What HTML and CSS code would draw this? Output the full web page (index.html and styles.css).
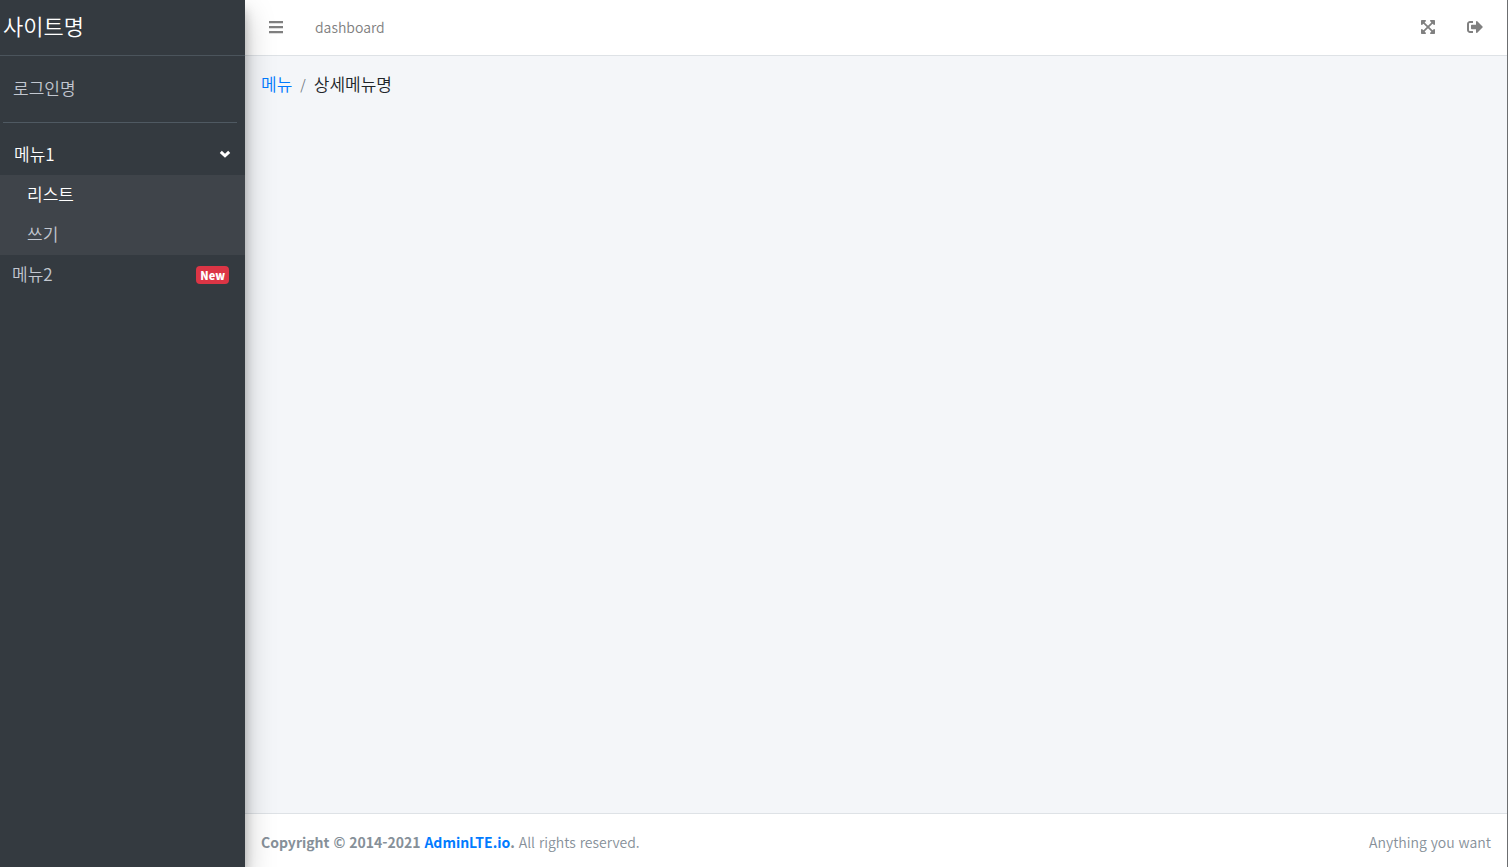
FILE: index.html
```
<!DOCTYPE html>
<html lang="ko">
<head>
  <meta charset="UTF-8">
  <meta name="viewport" content="width=device-width, initial-scale=1.0">
  <title>사이트명</title>
  <link rel="stylesheet" href="styles.css">
</head>
<body>
  <div class="wrapper">

    <!-- Sidebar -->
    <aside class="sidebar">
      <a href="#" class="brand">사이트명</a>
      <div class="user-panel">
        <a href="#">로그인명</a>
      </div>
      <nav>
        <ul class="menu">
          <li>
            <a href="#" class="menu-link parent active">
              메뉴1
              <svg class="arrow" viewBox="0 0 12 8"><path d="M1.8 1.8L6 5.8l4.2-4"/></svg>
            </a>
            <ul class="submenu">
              <li><a href="#" class="menu-link active">리스트</a></li>
              <li><a href="#" class="menu-link">쓰기</a></li>
            </ul>
          </li>
          <li>
            <a href="#" class="menu-link">메뉴2 <span class="badge">New</span></a>
          </li>
        </ul>
      </nav>
    </aside>

    <div class="main">
      <!-- Navbar -->
      <header class="navbar">
        <button type="button" class="icon-btn" aria-label="메뉴 열기">
          <svg viewBox="0 0 448 512"><path d="M0 60h448v72H0zM0 220h448v72H0zM0 380h448v72H0z"/></svg>
        </button>
        <a href="#" class="nav-link">dashboard</a>
        <div class="navbar-right">
          <button type="button" class="icon-btn" aria-label="전체 화면">
            <svg viewBox="0 0 448 512"><path d="M448 344v112a23.94 23.94 0 0 1-24 24H312c-21.39 0-32.09-25.9-17-41l36.2-36.2L224 295.6 116.77 402.9 153 439c15.09 15.1 4.39 41-17 41H24a23.94 23.94 0 0 1-24-24V344c0-21.4 25.89-32.1 41-17l36.19 36.2L184.46 256 77.18 148.7 41 185c-15.1 15.1-41 4.4-41-17V56a23.94 23.94 0 0 1 24-24h112c21.39 0 32.09 25.9 17 41l-36.2 36.2L224 216.4l107.23-107.3L295 73c-15.09-15.1-4.39-41 17-41h112a23.94 23.94 0 0 1 24 24v112c0 21.4-25.89 32.1-41 17l-36.19-36.2L263.54 256l107.28 107.3L407 327.1c15.1-15.2 41-4.5 41 16.9z"/></svg>
          </button>
          <button type="button" class="icon-btn" aria-label="로그아웃">
            <svg viewBox="0 0 512 512"><path d="M497 273L329 441c-15 15-41 4.5-41-17v-96H152c-13.3 0-24-10.7-24-24v-96c0-13.3 10.7-24 24-24h136v-96c0-21.4 25.9-32 41-17l168 168c9.3 9.4 9.3 24.6 0 34zM192 436v-40c0-6.6-5.4-12-12-12H96c-17.7 0-32-14.3-32-32V160c0-17.7 14.3-32 32-32h84c6.6 0 12-5.4 12-12V76c0-6.6-5.4-12-12-12H96c-53 0-96 43-96 96v192c0 53 43 96 96 96h84c6.6 0 12-5.4 12-12z"/></svg>
          </button>
        </div>
      </header>

      <!-- Content -->
      <main class="content">
        <ol class="breadcrumb">
          <li><a href="#">메뉴</a></li>
          <li>상세메뉴명</li>
        </ol>
      </main>

      <!-- Footer -->
      <footer class="footer">
        <div><strong>Copyright © 2014-2021 <a href="#">AdminLTE.io</a>.</strong> All rights reserved.</div>
        <div>Anything you want</div>
      </footer>
    </div>

  </div>
</body>
</html>
```
FILE: styles.css
```
* {
  box-sizing: border-box;
}

body {
  margin: 0;
  font-family: 'Noto Sans CJK KR', sans-serif;
  font-size: 17px;
  font-weight: 350;
  line-height: 24px;
  color: #212529;
}

a {
  color: #007bff;
  text-decoration: none;
}

ul,
ol {
  list-style: none;
  margin: 0;
  padding: 0;
}

.wrapper {
  display: flex;
  min-height: 100vh;
  border-right: 1px solid #6c6e70;
}

/* Sidebar */
.sidebar {
  width: 245px;
  flex-shrink: 0;
  background-color: #343a40;
  box-shadow: 0 14px 28px rgba(0, 0, 0, 0.25), 0 10px 10px rgba(0, 0, 0, 0.22);
  z-index: 1;
}

.sidebar a {
  color: #c2c7d0;
}

.sidebar .brand {
  display: block;
  height: 56px;
  padding: 13px 3px;
  border-bottom: 1px solid #4b545c;
  font-size: 22px;
  color: #fff;
}

.user-panel {
  margin: 0 8px 12px 3px;
  padding: 20px 10px 22px;
  border-bottom: 1px solid #4f5962;
}

.menu-link {
  display: flex;
  align-items: center;
  justify-content: space-between;
  height: 40px;
  padding: 0 16px 2px 12px;
}

.menu-link.parent {
  padding: 0 14px 2px;
}

.sidebar .active {
  color: #fff;
}

.submenu {
  background-color: #3f444a;
}

.submenu .menu-link {
  padding-left: 27px;
}

.arrow {
  width: 12px;
  height: 8px;
  fill: none;
  stroke: #fff;
  stroke-width: 3;
}

.badge {
  margin-top: 2px;
  padding: 0 4px;
  border-radius: 4px;
  background-color: #dc3545;
  color: #fff;
  font-size: 11px;
  font-weight: 900;
  line-height: 18px;
}

/* Main area */
.main {
  flex: 1;
  display: flex;
  flex-direction: column;
}

.navbar {
  display: flex;
  align-items: center;
  height: 56px;
  padding: 0 8px 2px;
  background-color: #fff;
  border-bottom: 1px solid #dee2e6;
}

.nav-link {
  padding: 0 16px;
  font-size: 14px;
  color: #808080;
}

.icon-btn {
  display: flex;
  padding: 12px 16px;
  border: none;
  background: none;
  cursor: pointer;
}

.icon-btn svg {
  height: 16px;
  fill: #808080;
}

.navbar-right {
  display: flex;
  margin-left: auto;
}

.content {
  flex: 1;
  padding: 16px;
  background-color: #f4f6f9;
}

.breadcrumb {
  display: flex;
}

.breadcrumb li + li::before {
  content: "/";
  padding: 0 8px;
  font-size: 14px;
  color: #6c757d;
}

.footer {
  display: flex;
  justify-content: space-between;
  padding: 16px 16px 13px;
  background-color: #fff;
  border-top: 1px solid #dee2e6;
  font-size: 14px;
  color: #869099;
}
```
